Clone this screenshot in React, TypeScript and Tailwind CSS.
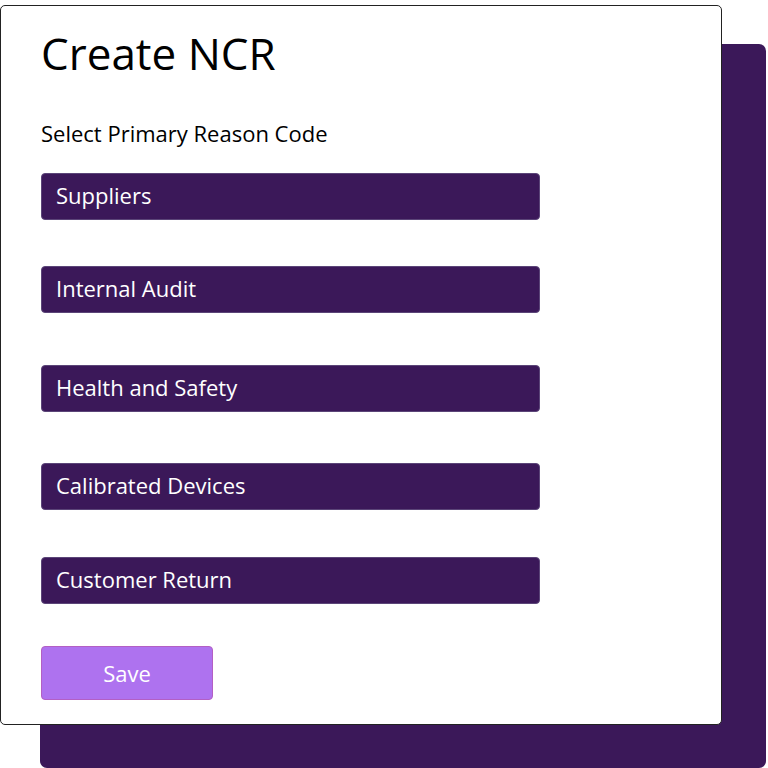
import React from "react";

const reasons = [
  { label: "Suppliers", gap: "mt-[26px]" },
  { label: "Internal Audit", gap: "mt-[46px]" },
  { label: "Health and Safety", gap: "mt-[52px]" },
  { label: "Calibrated Devices", gap: "mt-[51px]" },
  { label: "Customer Return", gap: "mt-[47px]" },
];

const App: React.FC = () => {
  return (
    <div className="w-[768px] h-[768px] bg-white overflow-hidden" style={{ fontFamily: '"Open Sans", "Noto Sans", sans-serif' }}>
      <div className="pt-[5px]">
        <div className="w-[722px] h-[720px] bg-white border border-[#222] rounded-[5px] shadow-[42px_41px_0_2px_#3b1859] pl-[40px] pt-[19px]">
          <h1 className="text-[44px] leading-[56px] text-black">Create NCR</h1>
          <p className="mt-[38px] text-[22px] leading-[28px] text-black">Select Primary Reason Code</p>
          <div className="flex flex-col">
            {reasons.map((r) => (
              <button
                key={r.label}
                className={`${r.gap} w-[499px] h-[47px] bg-[#3b1859] border border-[#5b4578] rounded-[4px] text-left pl-[14px] pb-[2px] text-white text-[22px]`}
              >
                {r.label}
              </button>
            ))}
          </div>
          <button className="mt-[42px] w-[172px] h-[54px] bg-[#ae72ef] border border-[#b35fc4] rounded-[4px] text-white text-[22px]">
            Save
          </button>
        </div>
      </div>
    </div>
  );
};

export default App;
